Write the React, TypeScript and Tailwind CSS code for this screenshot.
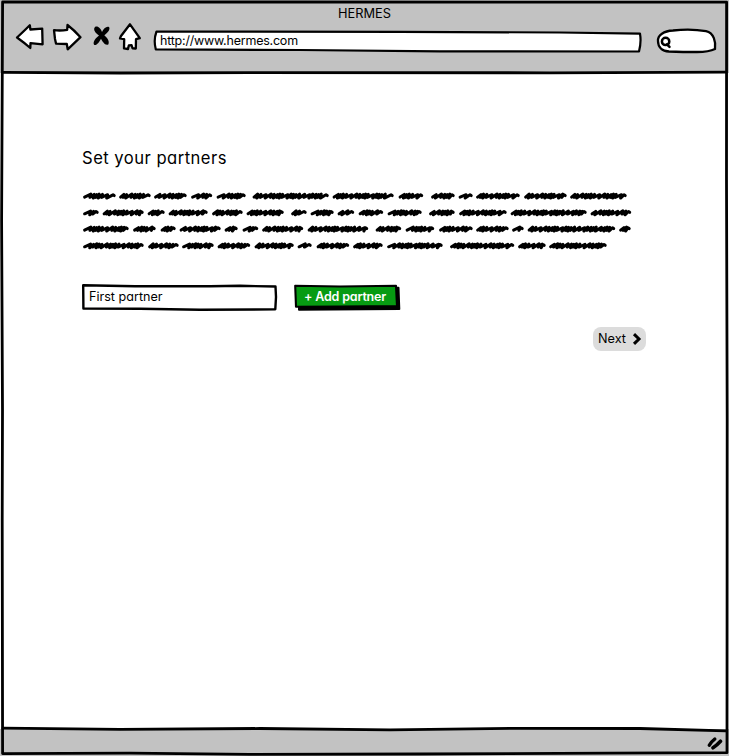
import React from "react";

type Word = [number, number];

const lines: { y: number; words: Word[] }[] = [
  { y: 196, words: [[83, 116], [119, 151], [154, 187], [191, 212.5], [216.5, 246], [252.5, 329], [332.5, 394], [398.5, 423.5], [431, 455], [458.5, 473], [476, 520], [524, 567], [570, 627]] },
  { y: 212.7, words: [[83, 99], [102.5, 144], [147.5, 165], [168.5, 208], [212, 243], [246.5, 284], [291, 307], [310.5, 334], [337.5, 354.5], [358.5, 383.5], [387.5, 422], [429, 455], [459, 507], [510.5, 587], [590.5, 631.5]] },
  { y: 229, words: [[83, 129], [133, 156], [160.5, 176], [179.5, 221], [224.5, 238], [242.5, 258.5], [262, 303.5], [307.5, 368.5], [375.5, 401.5], [405.5, 434.5], [439, 473], [476, 509], [512, 524], [527.5, 615.5], [619, 631]] },
  { y: 245.7, words: [[83, 144], [148, 179], [182, 214], [217.5, 250.5], [254.5, 294], [297.5, 312], [316.5, 349.5], [353, 383], [387, 443], [450, 514.5], [518, 546], [549, 607]] },
];

// Scribbled word: slanted up strokes, some long and some tight, with short steep returns.
function scribble([start, end]: Word, y: number): string {
  const steps = [6, 3.9, 4.2, 3.3, 3.6, 6.2, 4.2, 3.3, 3.5, 4.3, 6];
  const last = end - 1.8;
  let i = Math.round(start * 3 + y) % steps.length;
  let x = start + 1.6;
  let d = `M${x} ${y + 1.1}`;
  while (x + steps[i % steps.length] < last - 1.8) {
    const step = steps[i++ % steps.length];
    const top = y - 1.9 + (i % 3) * 0.3;
    const foot = y + 1.4 + (i % 2) * 0.7;
    d += `L${(x + step).toFixed(1)} ${top}L${(x + step - 0.9).toFixed(1)} ${foot}`;
    x += step - 0.9;
  }
  return d + `L${last - 1.2} ${y - 1.2}L${last} ${y - 0.4}`;
}

const ink = { fill: "none", stroke: "#000", strokeLinecap: "round", strokeLinejoin: "round" } as const;

function WindowFrame() {
  return (
    <svg className="pointer-events-none absolute inset-0 h-[756px] w-[729px]" viewBox="0 0 729 756" {...ink} strokeWidth="2.8">
      <path d="M2.6 2L300 2L726.6 2.1L726.5 180L727.2 420L727 752.7L610 753.2L420 754L250 754.3L130 753.2L2.6 753.6L2.2 520L2.5 410L1.6 220L2.6 2Z" />
      <path d="M3 72.4L120 73L250 72.6L550 72.8L726 72.2" />
      <path d="M3 728.2L120 729.3L260 728.5L390 729.8L520 728.3L640 728.5L726 730.8" />
    </svg>
  );
}

function Toolbar() {
  return (
    <header className="h-[73px] shrink-0 bg-[#c2c2c2]">
      <div className="h-[22px] pt-[5px] text-center text-[12.8px] leading-[17px]">HERMES</div>
      <div className="flex h-[38px] items-start pl-[14px]">
        <svg className="h-[32px] w-[32px] shrink-0" viewBox="14 22 32 32" {...ink} fill="#fff" strokeWidth="2.3">
          <path d="M17 37.5Q24 31 29.8 25.2L30.4 29.5L42.2 28.7L42.6 44.3L30.5 43.2L30.3 48Q24 42.5 17 37.5Z" />
        </svg>
        <svg className="ml-[5px] h-[32px] w-[34px] shrink-0" viewBox="51 22 34 32" {...ink} fill="#fff" strokeWidth="2.3">
          <path d="M54 30.2Q61 31 67.2 29.8L67.5 25Q74 30 80.5 37.2L67.7 49.3L66.8 44L56 43.6L55 39Z" />
        </svg>
        <svg className="ml-[7px] h-[32px] w-[20px] shrink-0" viewBox="92 22 20 32" fill="#000">
          <path d="M95 27C97.5 25.3 101 28.5 102 32C103.5 28.5 107 25.5 109.2 27.2C110.5 30 107 33 104.3 35.3C107 37.5 110 41.5 108.3 44.5C105 46 102.5 41.5 101 38.8C99.5 42 96 46.5 94 44.7C92.6 41.5 96 38 99 35.6C95.5 33 92.7 29.5 95 27Z" />
        </svg>
        <svg className="ml-[5px] h-[32px] w-[26px] shrink-0" viewBox="117 22 26 32" {...ink} fill="#fff" strokeWidth="2.3">
          <path d="M130 24.3L139.8 38.2L136 39.2L135.8 48.5L132.5 48.3L131.6 45.2L128.8 45.4L128 49L124 48.4L124.2 39.2L120 38.4L121 36Z" />
        </svg>
        <div className="relative ml-[9px] mt-[7px] h-[24px] w-[492px] shrink-0">
          <svg className="absolute inset-0 h-[24px] w-[492px]" viewBox="152 29 492 24" {...ink} fill="#fff" strokeWidth="2.2">
            <path d="M156.5 31.5L400 31.8L560 32.5L640 33.7Q641.5 42 639 51.5L440 51.3L300 50L155.8 49.4Q153.3 40 156.5 31.5Z" />
          </svg>
          <span className="relative block pl-[8px] pt-[3px] text-[12.5px] leading-[18px] tracking-[-0.22px]">http://www.hermes.com</span>
        </div>
        <svg className="ml-[10px] mt-[4px] h-[30px] w-[66px] shrink-0" viewBox="654 26 66 30" {...ink} fill="#fff" strokeWidth="2.3">
          <path d="M658 41C657.5 35 664 31 673 30.5Q691 28.5 706 31.2C714 33 716 42 715 49Q709 52 697 52Q683 52 669 51.5C662 51 658 47 658 41Z" />
          <circle cx="665.6" cy="41.4" r="3.7" strokeWidth="2.5" />
          <path d="M667 44.3L669.5 46.8" strokeWidth="2.5" />
        </svg>
      </div>
    </header>
  );
}

export default function App() {
  return (
    <div
      className="relative flex h-[756px] w-[729px] flex-col overflow-hidden bg-white text-black [font-feature-settings:'cv11']"
      style={{ fontFamily: "Inter, 'Liberation Sans', sans-serif" }}
    >
      <Toolbar />
      <main className="flex flex-1 flex-col pl-[82px] pr-[83px] pt-[73px]">
        <h1 className="h-[24px] whitespace-nowrap text-[16.6px] leading-[24px] tracking-[0.48px]">Set your partners</h1>
        <svg className="mt-[18px] h-[66px] w-[554px]" viewBox="82 188 554 66" {...ink} strokeWidth="3">
          {lines.map((line) => line.words.map((word) => <path key={`${line.y}-${word[0]}`} d={scribble(word, line.y)} />))}
        </svg>
        <div className="mt-[29px] flex h-[30px] items-start">
          <div className="relative h-[28px] w-[196px]">
            <svg className="absolute inset-0 h-[28px] w-[196px]" viewBox="82 283 196 28" {...ink} strokeWidth="2.4">
              <path d="M83.2 285.3L135 286.2L210 286.2L240 285.8L275.5 286.5L276 297L275.3 309.3L200 309.8L140 308.8L83.4 308.5L83.3 296Z" />
            </svg>
            <input className="relative block h-[27px] w-full bg-transparent pl-[7px] text-[12.6px] text-black outline-none" defaultValue="First partner" />
          </div>
          <button className="relative ml-[14px] h-[28px] w-[110px]">
            <svg className="absolute inset-0 h-[28px] w-[110px]" viewBox="292 283 110 28" {...ink}>
              <path d="M299 288.5L398.5 287.8L399.3 309L299 309.8Z" fill="#000" strokeWidth="2" />
              <path d="M295.2 285.8L340 286.5L396 285.8L397 306L340 306.6L296 306.7Z" fill="#079b12" strokeWidth="2.1" />
            </svg>
            <span className="relative block whitespace-nowrap pl-[12px] text-left text-[12.5px] font-semibold leading-[26px] tracking-[-0.18px] text-white">+ Add partner</span>
          </button>
        </div>
        <button className="mt-[14px] flex h-[24px] w-[53px] items-center self-end rounded-[8px] bg-[#dcdcdc] pl-[5px] text-[12.7px]">
          Next
          <svg className="ml-[6px] h-[12px] w-[10px] shrink-0" viewBox="0 0 10 12" {...ink} strokeWidth="3" strokeLinecap="butt" strokeLinejoin="miter">
            <path d="M2 1.1L7 6L2 10.9" />
          </svg>
        </button>
      </main>
      <footer className="flex h-[27px] shrink-0 justify-end bg-[#c2c2c2]">
        <svg className="mr-[6px] mt-[6px] h-[18px] w-[18px]" viewBox="705 735 18 18" {...ink}>
          <path d="M709.3 745.3Q711 742 714.8 739" strokeWidth="3.4" />
          <path d="M713 747.8Q716.5 745.5 720.5 741.2" strokeWidth="3.6" />
        </svg>
      </footer>
      <WindowFrame />
    </div>
  );
}
